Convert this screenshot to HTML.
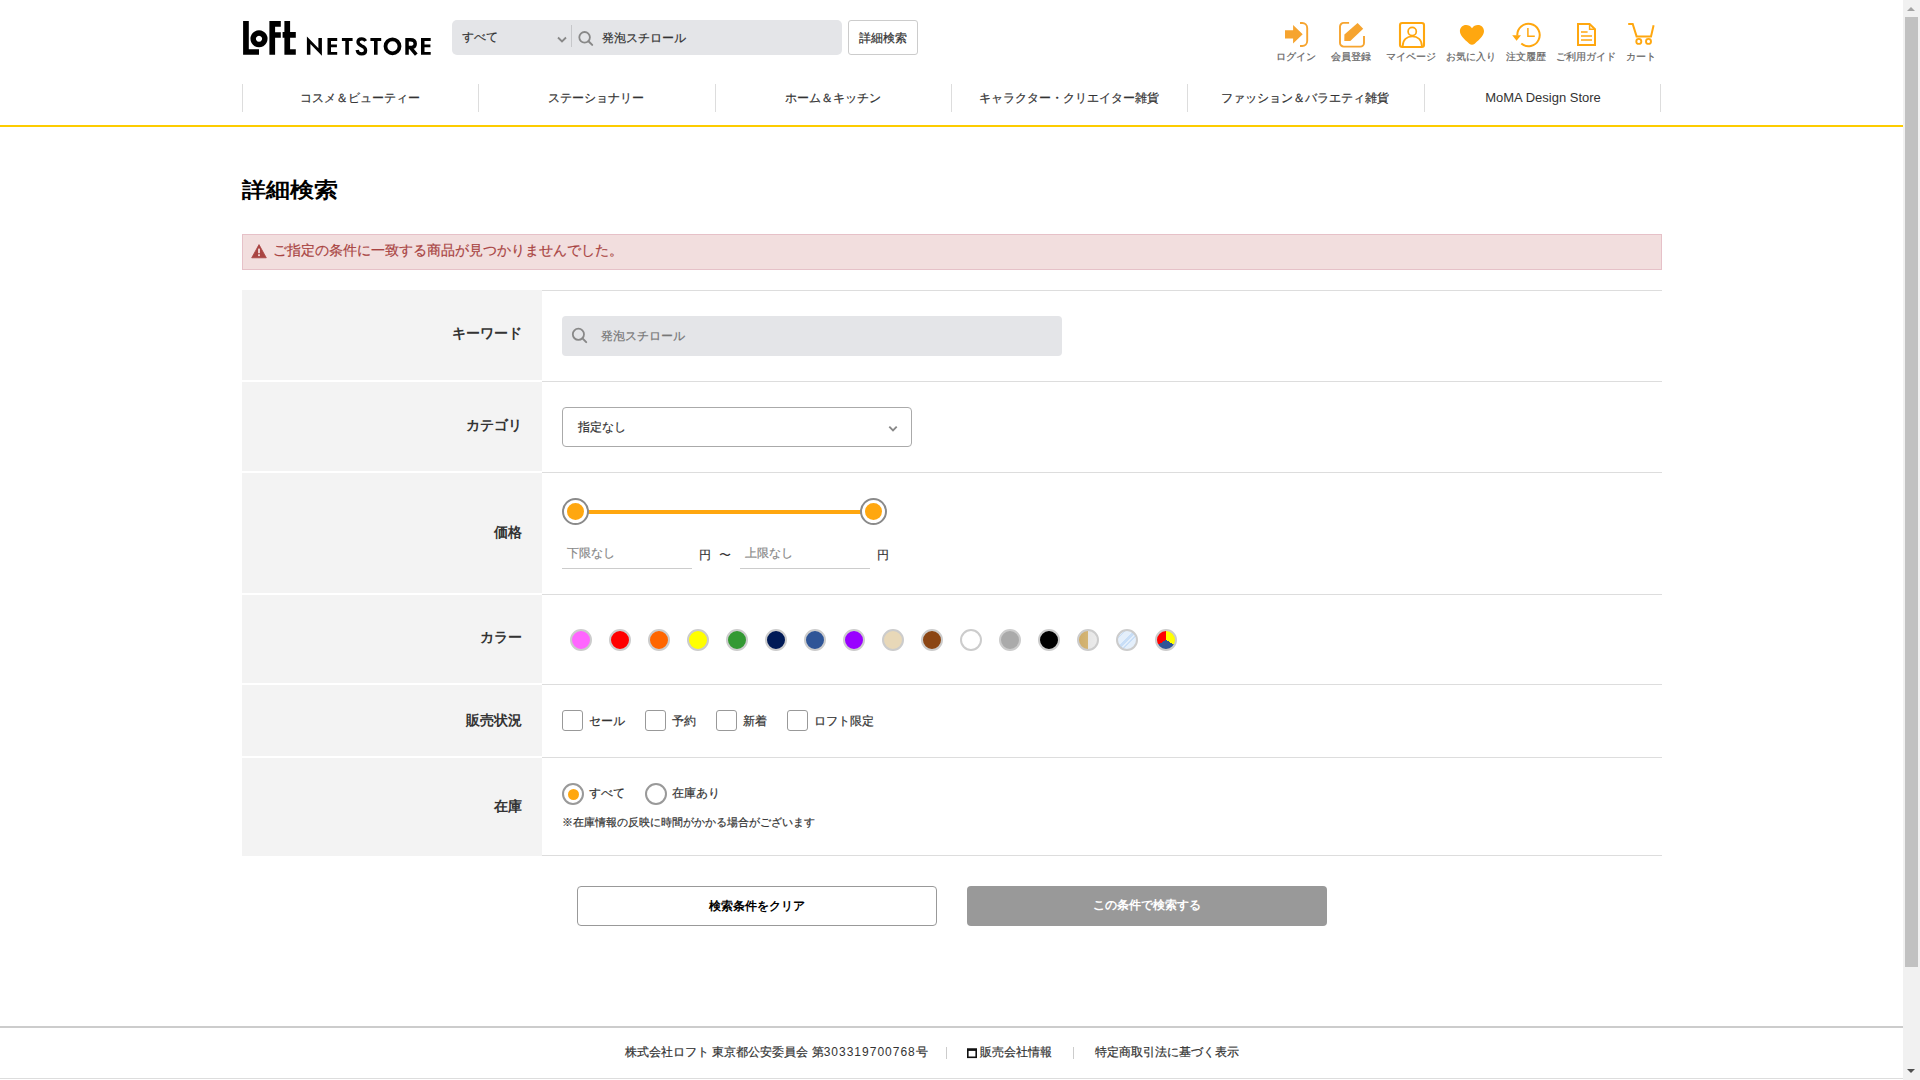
<!DOCTYPE html>
<html lang="ja">
<head>
<meta charset="utf-8">
<title>詳細検索 | LOFT NETSTORE</title>
<style>
*{box-sizing:border-box;margin:0;padding:0}
html,body{width:1920px;height:1080px;overflow:hidden;background:#fff}
body{font-family:"Liberation Sans",sans-serif;color:#333;position:relative;-webkit-text-stroke:0.2px currentColor}
.lab,.title,.btn{-webkit-text-stroke:0}
.abs{position:absolute}
.t{position:absolute;white-space:nowrap;line-height:1}
/* scrollbar */
#sb{position:absolute;left:1903px;top:0;width:17px;height:1080px;background:#f1f1f1}
#sb .thumb{position:absolute;left:2px;top:17px;width:13px;height:950px;background:#c1c1c1}
#sb .up{position:absolute;left:4px;top:7px;width:0;height:0;border-left:4.5px solid transparent;border-right:4.5px solid transparent;border-bottom:4.5px solid #a3a3a3}
#sb .dn{position:absolute;left:4px;top:1069px;width:0;height:0;border-left:4.5px solid transparent;border-right:4.5px solid transparent;border-top:4.5px solid #505050}
/* header */
.sbox{position:absolute;left:452px;top:20px;width:390px;height:35px;background:#e4e5e8;border-radius:5px}
.dbtn{position:absolute;left:848px;top:20px;width:70px;height:35px;border:1px solid #ccc;border-radius:3px;background:#fff}
.ico{position:absolute;top:0}
.ilab{position:absolute;top:52px;font-size:10px;line-height:10px;color:#666;white-space:nowrap}
.navsep{position:absolute;top:84px;width:1px;height:28px;background:#ddd}
.nav{position:absolute;top:92px;font-size:12px;line-height:12px;color:#333;white-space:nowrap;text-align:center;width:236px}
#yl{position:absolute;left:0;top:125px;width:1903px;height:2px;background:#fdcc00}
/* main */
.title{position:absolute;left:242px;top:179px;font-size:24px;line-height:24px;font-weight:bold;color:#000;transform:scaleY(.875);transform-origin:0 0}
.alert{position:absolute;left:242px;top:234px;width:1420px;height:36px;background:#f2dede;border:1px solid #e6c1c8}
.th{position:absolute;left:242px;width:300px;background:#f3f3f3}
.hl{position:absolute;left:542px;width:1120px;height:1px;background:#ddd}
.lab{position:absolute;right:1398px;font-size:14px;line-height:14px;font-weight:bold;color:#333;white-space:nowrap;text-align:right}
.cdot{position:absolute;top:629px;width:22px;height:22px;border-radius:50%;border:2px solid #ccc}
.cb{position:absolute;top:710px;width:21px;height:21px;border:1px solid #999;border-radius:3px;background:#fff}
.cbt{position:absolute;top:715px;font-size:12px;line-height:12px;color:#333;white-space:nowrap}
.btn{position:absolute;top:886px;width:360px;height:40px;border-radius:4px;font-size:12px;font-weight:bold;text-align:center;line-height:38px}
</style>
</head>
<body>
<div id="sb"><div class="up"></div><div class="thumb"></div><div class="dn"></div></div>

<!-- logo -->
<svg class="abs" style="left:0;top:0" width="440" height="70" viewBox="0 0 440 70">
  <g fill="#000">
    <path d="M243.1 21.1H248.8V49.2H259V54.7H243.1Z"/>
    <path fill-rule="evenodd" d="M259 30.25a8.55 8.55 0 1 0 0.001 0ZM259 35.75a3.05 3.05 0 1 1 -0.001 0Z"/>
    <path d="M269.4 21.1H280.8V26.8H275.1V32.3H280.8V37.8H275.1V54.7H269.4Z"/>
    <path d="M284.4 21.1H290.1V32.1H295.8V37.8H290.1V49.2H295.8V54.7H284.4V37.8H282.6V32.1H284.4Z"/>
  </g>
</svg>

<svg class="abs" style="left:0;top:0" width="440" height="70" viewBox="0 0 440 70">
  <g fill="#000">
    <path d="M306.9 54.7V36.5L318.4 48.3V38.1H321.9V55.7L310.4 44.1V54.7Z"/>
    <path d="M327.5 38.1H337.2V40.9H331V44.6H336.9V47.2H331V51.9H337.2V54.7H327.5Z"/>
    <path d="M341.9 38.1H352.6V41.1H348.9V54.7H345.3V41.1H341.9Z"/>
    <path d="M370.4 38.1H381.2V41.1H377.6V54.7H374V41.1H370.4Z"/>
    <path d="M421 38.1H430.7V40.9H424.5V44.6H430.4V47.2H424.5V51.9H430.7V54.7H421Z"/>
  </g>
  <g fill="none" stroke="#000">
    <path stroke-width="3.3" d="M365.6 41C364.7 39.5 363.3 38.9 361.7 38.9C359.5 38.9 358 40.2 358 42.1C358 44.2 359.8 45 361.8 45.9C364.2 46.9 365.6 48.1 365.6 50.3C365.6 52.6 363.9 53.9 361.6 53.9C359.3 53.9 357.6 52.4 357.1 50"/>
    <circle cx="392.5" cy="46.3" r="7" stroke-width="3.8"/>
    <path stroke-width="3.5" d="M407.05 54.7V39.85H410.5C413.6 39.85 415.2 41.4 415.2 43.7C415.2 46 413.6 47.5 410.5 47.5H407.05M410.2 47.3L416.3 54.7"/>
  </g>
</svg>

<!-- search box -->
<div class="sbox"></div>
<div class="t" style="left:462px;top:31px;font-size:12px;color:#333">すべて</div>
<svg class="abs" style="left:555px;top:34px" width="14" height="10" viewBox="0 0 14 10"><path d="M3 3.5L7 7.5L11 3.5" fill="none" stroke="#888" stroke-width="1.8"/></svg>
<div class="abs" style="left:571px;top:25px;width:1px;height:22px;background:#c6c7ca"></div>
<svg class="abs" style="left:576px;top:29px" width="20" height="20" viewBox="0 0 20 20"><circle cx="8.6" cy="8.3" r="5.3" fill="none" stroke="#888" stroke-width="1.8"/><path d="M12.5 12.2L16.2 15.9" stroke="#888" stroke-width="2" stroke-linecap="round"/></svg>
<div class="t" style="left:602px;top:32px;font-size:12px;color:#333">発泡スチロール</div>
<div class="dbtn"></div>
<div class="t" style="left:859px;top:32px;font-size:12px;color:#333">詳細検索</div>

<!-- header icons -->
<svg class="abs" style="left:1260px;top:0" width="420" height="70" viewBox="1260 0 420 70">
 <g fill="#f6a42f" stroke="none">
  <path d="M1285 30.2H1293.1V25L1302.7 34.3L1293.1 43.5V38.4H1285Z"/>
  <path d="M1344.4 34.4L1357.6 22.9L1363.2 28.8L1350.3 41H1344.3Z"/>
 </g>
 <g fill="none" stroke="#f6a42f">
  <path stroke-width="1.9" d="M1300 23H1302.2A5 5 0 0 1 1307.2 28V41A5 5 0 0 1 1302.2 46H1300"/>
  <path stroke-width="1.9" d="M1349.1 22.9H1343.7A3.7 3.7 0 0 0 1340 26.6V42.9A3.7 3.7 0 0 0 1343.7 46.6H1360.3A3.7 3.7 0 0 0 1364 42.9V36"/>
 </g>
 <g fill="none" stroke="#ffa70f">
  <rect x="1400" y="23" width="24" height="24" rx="2.2" stroke-width="2.1"/>
  <circle cx="1412.2" cy="31.4" r="4.1" stroke-width="1.7"/>
  <path stroke-width="1.7" d="M1402.7 46.2C1402.7 40 1406.8 36.4 1412.3 36.4C1417.8 36.4 1421.9 40 1421.9 46.2"/>
  <path stroke-width="2" d="M1517.3 35.6A11.2 11.2 0 1 1 1521.3 43.6"/>
  <path stroke-width="1.5" d="M1527.9 28.1V36.3H1534.8"/>
  <path stroke-width="2" d="M1578 24H1589.6L1595 29.2V45H1578Z"/>
  <path stroke-width="1.5" d="M1589.6 24.5V29.2H1595"/>
  <path stroke-width="1.7" d="M1581 32H1587.6M1581 36H1592M1581 40H1592"/>
  <path stroke-width="2" d="M1628.2 24H1632.7L1636.6 36.4H1651L1653.6 25.2"/>
  <circle cx="1638.8" cy="41.4" r="2.5" stroke-width="1.9"/>
  <circle cx="1648.5" cy="41.4" r="2.5" stroke-width="1.9"/>
 </g>
 <g fill="#ffa70f">
  <path d="M1472 28.2C1470.5 26 1468.6 24.9 1466.1 24.9C1462.6 24.9 1459.9 27.6 1459.9 31.1C1459.9 35.2 1463.5 38.8 1469.3 43.7Q1472 46 1474.7 43.7C1480.5 38.8 1484 35.2 1484 31.1C1484 27.6 1481.4 24.9 1477.9 24.9C1475.4 24.9 1473.5 26 1472 28.2Z"/>
  <path d="M1512.2 35.3H1521L1516.6 40.7Z"/>
 </g>
</svg>
<div class="ilab" style="left:1276px">ログイン</div>
<div class="ilab" style="left:1331px">会員登録</div>
<div class="ilab" style="left:1386px">マイページ</div>
<div class="ilab" style="left:1446px">お気に入り</div>
<div class="ilab" style="left:1506px">注文履歴</div>
<div class="ilab" style="left:1556px">ご利用ガイド</div>
<div class="ilab" style="left:1626px">カート</div>

<!-- nav -->
<div class="navsep" style="left:242px"></div>
<div class="navsep" style="left:478px"></div>
<div class="navsep" style="left:715px"></div>
<div class="navsep" style="left:951px"></div>
<div class="navsep" style="left:1187px"></div>
<div class="navsep" style="left:1424px"></div>
<div class="navsep" style="left:1660px"></div>
<div class="nav" style="left:242px">コスメ＆ビューティー</div>
<div class="nav" style="left:478px">ステーショナリー</div>
<div class="nav" style="left:715px">ホーム＆キッチン</div>
<div class="nav" style="left:951px">キャラクター・クリエイター雑貨</div>
<div class="nav" style="left:1187px">ファッション＆バラエティ雑貨</div>
<div class="nav" style="left:1425px;font-size:13px;top:92px;-webkit-text-stroke:0">MoMA Design Store</div>
<div id="yl"></div>


<!-- main -->
<div class="title">詳細検索</div>
<div class="alert"></div>
<svg class="abs" style="left:250px;top:242px" width="18" height="18" viewBox="0 0 18 18"><path d="M9 2.6L16.3 15.8H1.7Z" fill="#a94442" stroke="#a94442" stroke-width="0.8" stroke-linejoin="round"/><rect x="8.1" y="6.6" width="1.8" height="4.6" fill="#f2dede"/><rect x="8.1" y="12.3" width="1.8" height="1.8" fill="#f2dede"/></svg>
<div class="t" style="left:273px;top:243px;font-size:14px;color:#a94442">ご指定の条件に一致する商品が見つかりませんでした。</div>

<div class="th" style="top:290px;height:90px"></div>
<div class="th" style="top:382px;height:89px"></div>
<div class="th" style="top:473px;height:120px"></div>
<div class="th" style="top:595px;height:88px"></div>
<div class="th" style="top:685px;height:71px"></div>
<div class="th" style="top:758px;height:98px"></div>
<div class="hl" style="top:290px"></div>
<div class="hl" style="top:381px"></div>
<div class="hl" style="top:472px"></div>
<div class="hl" style="top:594px"></div>
<div class="hl" style="top:684px"></div>
<div class="hl" style="top:757px"></div>
<div class="hl" style="top:855px"></div>

<div class="lab" style="top:326px">キーワード</div>
<div class="lab" style="top:418px">カテゴリ</div>
<div class="lab" style="top:525px">価格</div>
<div class="lab" style="top:630px">カラー</div>
<div class="lab" style="top:713px">販売状況</div>
<div class="lab" style="top:799px">在庫</div>

<!-- keyword -->
<div class="abs" style="left:562px;top:316px;width:500px;height:40px;background:#e4e5e8;border-radius:4px"></div>
<svg class="abs" style="left:569px;top:325px" width="22" height="22" viewBox="0 0 22 22"><circle cx="9.4" cy="9.3" r="5.6" fill="none" stroke="#888" stroke-width="1.8"/><path d="M13.5 13.4L17.2 17.1" stroke="#888" stroke-width="2" stroke-linecap="round"/></svg>
<div class="t" style="left:601px;top:330px;font-size:12px;color:#777">発泡スチロール</div>

<!-- category -->
<div class="abs" style="left:562px;top:407px;width:350px;height:40px;border:1px solid #aaa;border-radius:4px;background:#fff"></div>
<div class="t" style="left:578px;top:421px;font-size:12px;color:#333">指定なし</div>
<svg class="abs" style="left:886px;top:423px" width="14" height="12" viewBox="0 0 14 12"><path d="M3.3 3.6L7 7.3L10.7 3.6" fill="none" stroke="#888" stroke-width="1.9"/></svg>

<!-- price -->
<div class="abs" style="left:575px;top:510px;width:298px;height:4px;background:#ffa70f"></div>
<div class="abs" style="left:562px;top:498px;width:27px;height:27px;border-radius:50%;border:2px solid #8a8a8a;background:#fff"></div>
<div class="abs" style="left:567px;top:503px;width:17px;height:17px;border-radius:50%;background:#ffa70f"></div>
<div class="abs" style="left:860px;top:498px;width:27px;height:27px;border-radius:50%;border:2px solid #8a8a8a;background:#fff"></div>
<div class="abs" style="left:865px;top:503px;width:17px;height:17px;border-radius:50%;background:#ffa70f"></div>
<div class="abs" style="left:562px;top:568px;width:130px;height:1px;background:#ccc"></div>
<div class="abs" style="left:740px;top:568px;width:130px;height:1px;background:#ccc"></div>
<div class="t" style="left:567px;top:547px;font-size:12px;color:#888">下限なし</div>
<div class="t" style="left:745px;top:547px;font-size:12px;color:#888">上限なし</div>
<div class="t" style="left:699px;top:549px;font-size:12px;color:#333">円</div>
<div class="t" style="left:719px;top:549px;font-size:12px;color:#333;-webkit-text-stroke:0">〜</div>
<div class="t" style="left:877px;top:549px;font-size:12px;color:#333">円</div>


<!-- colors -->
<div class="cdot" style="left:570px;background:#ff66ff"></div>
<div class="cdot" style="left:609px;background:#ff0000"></div>
<div class="cdot" style="left:648px;background:#ff6600"></div>
<div class="cdot" style="left:687px;background:#ffff00"></div>
<div class="cdot" style="left:726px;background:#339933"></div>
<div class="cdot" style="left:765px;background:#001a57"></div>
<div class="cdot" style="left:804px;background:#2f5597"></div>
<div class="cdot" style="left:843px;background:#9900ff"></div>
<div class="cdot" style="left:882px;background:#e8d8b8"></div>
<div class="cdot" style="left:921px;background:#8b4513"></div>
<div class="cdot" style="left:960px;background:#ffffff"></div>
<div class="cdot" style="left:999px;background:#aaaaaa"></div>
<div class="cdot" style="left:1038px;background:#000000"></div>
<div class="cdot" style="left:1077px;background:linear-gradient(90deg,#cfad6a 0,#d4b575 50%,#e6e6e6 50%,#ebebeb 100%)"></div>
<div class="cdot" style="left:1116px;background:repeating-linear-gradient(135deg,#c8def7 0,#c8def7 3px,#e4effb 3px,#e4effb 4.5px,#c8def7 4.5px,#c8def7 5.5px,#e4effb 5.5px,#e4effb 11px)"></div>
<div class="cdot" style="left:1155px;background:conic-gradient(#ffff00 0deg 120deg,#2f5597 120deg 240deg,#ff0000 240deg 360deg)"></div>

<!-- status -->
<div class="cb" style="left:562px"></div><div class="cbt" style="left:589px">セール</div>
<div class="cb" style="left:645px"></div><div class="cbt" style="left:672px">予約</div>
<div class="cb" style="left:716px"></div><div class="cbt" style="left:743px">新着</div>
<div class="cb" style="left:787px"></div><div class="cbt" style="left:814px">ロフト限定</div>

<!-- stock -->
<div class="abs" style="left:562px;top:783px;width:22px;height:22px;border-radius:50%;border:2px solid #999;background:#fff"></div>
<div class="abs" style="left:567.5px;top:788.5px;width:11px;height:11px;border-radius:50%;background:#ffa70f"></div>
<div class="cbt" style="left:589px;top:787px">すべて</div>
<div class="abs" style="left:645px;top:783px;width:22px;height:22px;border-radius:50%;border:2px solid #999;background:#fff"></div>
<div class="cbt" style="left:672px;top:787px">在庫あり</div>
<div class="t" style="left:562px;top:817px;font-size:11px;color:#333">※在庫情報の反映に時間がかかる場合がございます</div>

<!-- buttons -->
<div class="btn" style="left:577px;border:1px solid #999;background:#fff;color:#000">検索条件をクリア</div>
<div class="btn" style="left:967px;background:#999;color:#fff">この条件で検索する</div>

<!-- footer -->
<div class="abs" style="left:0;top:1026px;width:1903px;height:2px;background:#ccc"></div>
<div class="abs" style="left:0;top:1078px;width:1903px;height:1px;background:#ddd"></div>
<div class="t" style="left:625px;top:1046px;font-size:12px;color:#333">株式会社ロフト 東京都公安委員会 第<span style="letter-spacing:1px;-webkit-text-stroke:0">303319700768</span>号</div>
<div class="abs" style="left:946px;top:1047px;width:1px;height:12px;background:#ccc"></div>
<svg class="abs" style="left:966px;top:1047px" width="12" height="12" viewBox="0 0 12 12"><rect x="1.8" y="2.3" width="8.4" height="8" fill="none" stroke="#111" stroke-width="1.6"/><rect x="1" y="1.5" width="10" height="2.4" fill="#111"/></svg>
<div class="t" style="left:980px;top:1046px;font-size:12px;color:#333">販売会社情報</div>
<div class="abs" style="left:1073px;top:1047px;width:1px;height:12px;background:#ccc"></div>
<div class="t" style="left:1095px;top:1046px;font-size:12px;color:#333">特定商取引法に基づく表示</div>

</body>
</html>
